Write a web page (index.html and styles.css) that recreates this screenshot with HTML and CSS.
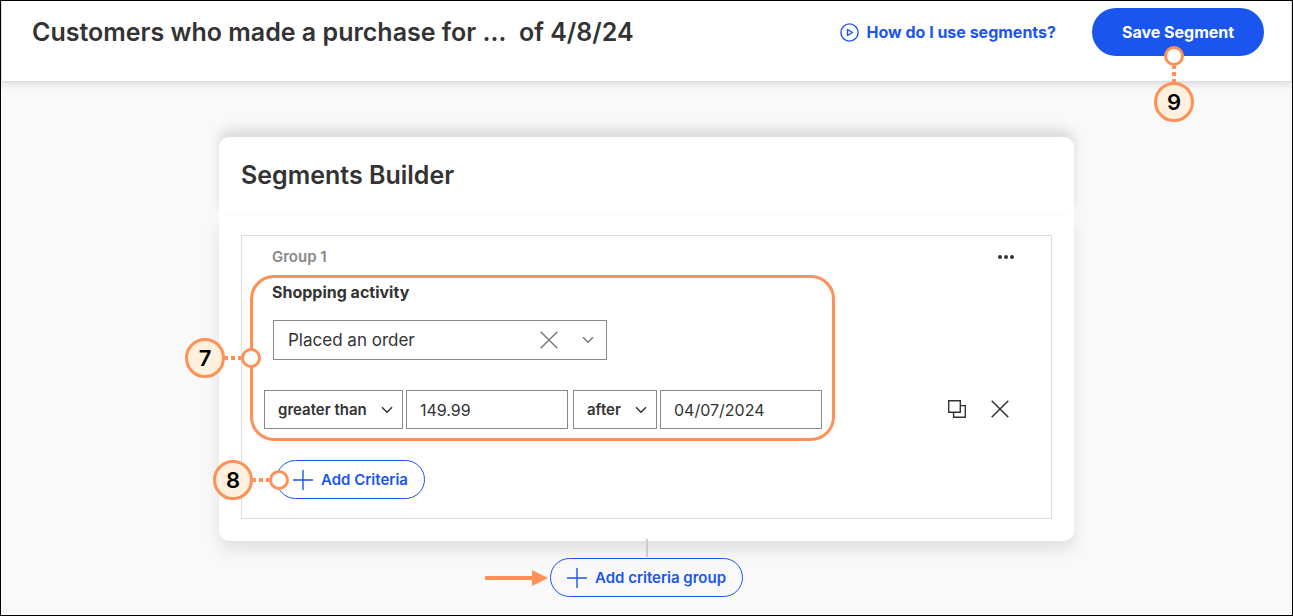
FILE: index.html
```html
<!DOCTYPE html>
<html lang="en">
<head>
	<meta charset="utf-8">
	<title>Segments Builder</title>
	<link rel="stylesheet" href="styles.css">
</head>
<body>
<header class="topbar">
	<h1 class="title">Customers who made a purchase for …&nbsp; of 4/8/24</h1>
	<a class="help" href="#">
		<svg width="19" height="19" viewBox="0 0 19 19" fill="none" stroke="currentColor" stroke-width="1.4"><circle cx="9.5" cy="9.5" r="8.6"/><path d="M7.5 6.5v6l5-3z" stroke-linejoin="round"/></svg>
		How do I use segments?
	</a>
	<div class="anchor">
		<button class="save" type="button">Save Segment</button>
		<div class="callout callout-save"><span class="ring"></span><span class="dots"></span><span class="number">9</span></div>
	</div>
</header>

<main class="page">
	<section class="card">
		<div class="card-head">
			<h2 class="title">Segments Builder</h2>
		</div>
		<div class="card-body">
			<div class="group">
				<div class="group-head">
					<h3 class="group-name">Group 1</h3>
					<button class="icon-button more" type="button" aria-label="Group options">
						<svg width="18" height="6" viewBox="0 0 18 6" fill="currentColor"><circle cx="3" cy="3" r="2"/><circle cx="9" cy="3" r="2"/><circle cx="15" cy="3" r="2"/></svg>
					</button>
				</div>

				<div class="criteria-row">
					<div class="criteria">
						<label class="criteria-name" for="activity">Shopping activity</label>
						<div class="select activity">
							<select id="activity"><option>Placed an order</option></select>
							<button class="icon-button clear" type="button" aria-label="Clear">
								<svg width="18" height="18" viewBox="0 0 18 18" fill="none" stroke="currentColor" stroke-width="1.4"><path d="M.7 .7l16.6 16.6M17.3 .7L.7 17.3"/></svg>
							</button>
							<svg class="chevron" width="12" height="8" viewBox="0 0 12 8" fill="none" stroke="currentColor" stroke-width="1.5"><path d="M1 1.2l5 5 5-5"/></svg>
						</div>
						<div class="filters">
							<div class="pair">
								<div class="select compare">
									<select aria-label="Amount comparison"><option>greater than</option></select>
									<svg class="chevron" width="12" height="8" viewBox="0 0 12 8" fill="none" stroke="currentColor" stroke-width="1.5"><path d="M1 1.2l5 5 5-5"/></svg>
								</div>
								<input class="field" type="text" value="149.99" aria-label="Amount">
							</div>
							<div class="pair">
								<div class="select when">
									<select aria-label="Date comparison"><option>after</option></select>
									<svg class="chevron" width="12" height="8" viewBox="0 0 12 8" fill="none" stroke="currentColor" stroke-width="1.5"><path d="M1 1.2l5 5 5-5"/></svg>
								</div>
								<input class="field" type="text" value="04/07/2024" aria-label="Date">
							</div>
						</div>
						<div class="callout callout-criteria"><span class="number">7</span><span class="dots"></span><span class="ring"></span></div>
					</div>
					<div class="actions">
						<button class="icon-button" type="button" aria-label="Duplicate">
							<svg width="18" height="18" viewBox="0 0 18 18" fill="none" stroke="currentColor"><path d="M.7 .7h11.6v11.6H.7zM12.3 5.6h5v11.7H5.6v-5" stroke-width="1.4"/></svg>
						</button>
						<button class="icon-button" type="button" aria-label="Remove">
							<svg width="18" height="18" viewBox="0 0 18 18" fill="none" stroke="currentColor" stroke-width="1.5"><path d="M.7 .7l16.6 16.6M17.3 .7L.7 17.3"/></svg>
						</button>
					</div>
				</div>

				<div class="anchor add-criteria">
					<button class="add" type="button">
						<svg width="20" height="20" viewBox="0 0 20 20" stroke="currentColor" stroke-width="1.4"><path d="M10 0v20M0 10h20"/></svg>
						Add Criteria
					</button>
					<div class="callout callout-add"><span class="number">8</span><span class="dots"></span><span class="ring"></span></div>
				</div>
			</div>
		</div>
	</section>

	<div class="connector"></div>
	<div class="anchor">
		<button class="add" type="button">
			<svg width="20" height="20" viewBox="0 0 20 20" stroke="currentColor" stroke-width="1.4"><path d="M10 0v20M0 10h20"/></svg>
			Add criteria group
		</button>
		<svg class="arrow" width="63" height="16" viewBox="0 0 63 16" fill="#ff9157"><path d="M0 6h47V0l16 8-16 8v-6H0z"/></svg>
	</div>
</main>
</body>
</html>
```
FILE: styles.css
```css
* {
	box-sizing: border-box;
}
body {
	margin: 0;
	min-height: 100vh;
	border: 1px solid #000;
	background: #f9f9f9;
	color: #333;
	font-family: Inter, "Liberation Sans", sans-serif;
	font-size: 16px;
	line-height: 20px;
}
h1, h2, h3 {
	margin: 0;
}
svg {
	display: block;
	flex: none;
}
button, input, select {
	font: inherit;
	color: inherit;
	margin: 0;
}
button {
	cursor: pointer;
}

.topbar {
	display: flex;
	align-items: center;
	padding: 7px 27px 25px 30px;
	background: #fff;
	border: 1px solid #ddd;
	border-top: 0;
	box-shadow: 0 2px 8px rgba(0, 0, 0, 0.12);
}
.title {
	font-size: 25px;
	line-height: 32px;
	font-weight: 600;
}
.help {
	display: flex;
	align-items: center;
	gap: 8px;
	margin-left: auto;
	margin-right: 36px;
	color: #1a56ee;
	font-size: 16px;
	font-weight: 700;
	text-decoration: none;
}
.save {
	height: 48px;
	width: 172px;
	border: 0;
	border-radius: 24px;
	background: #1a56ee;
	color: #fff;
	font-size: 16px;
	font-weight: 700;
}
.anchor {
	position: relative;
}

/* card */
.page {
	display: flex;
	flex-direction: column;
	align-items: center;
	padding: 55px 20px 18px;
}
.card {
	width: 100%;
	max-width: 855px;
}
.card-head {
	padding: 22px 22px 25px;
	background: #fff;
	border-radius: 10px 10px 0 0;
	box-shadow: 0 -8px 12px rgba(0, 0, 0, 0.12);
}
.card-body {
	position: relative;
	padding: 19px 22px 22px;
	background: #fff;
	border-radius: 0 0 10px 10px;
	box-shadow: 0 9px 16px rgba(0, 0, 0, 0.1);
}
.group {
	padding: 11px 35px 19px 0;
	border: 1px solid #ddd;
}
.group-head {
	display: flex;
	justify-content: space-between;
	margin-bottom: 8px;
	padding-left: 30px;
}
.group-name {
	color: #888;
	font-size: 15px;
	font-weight: 600;
}
.icon-button {
	display: flex;
	align-items: center;
	justify-content: center;
	width: 32px;
	height: 32px;
	padding: 0;
	border: 0;
	background: none;
}
.more {
	width: 20px;
	height: 20px;
}
.criteria-row {
	display: flex;
	align-items: flex-end;
	justify-content: space-between;
}
.criteria {
	position: relative;
	flex: 0 1 585px;
	margin-left: 8px;
	padding: 4px 9px 9px 11px;
	border: 3px solid #ff9157;
	border-radius: 24px;
}
.criteria-name {
	display: block;
	padding-left: 8px;
	font-weight: 700;
}

/* fields */
.select {
	position: relative;
}
.select select {
	appearance: none;
	width: 100%;
	height: 39px;
	padding: 0 13px;
	border: 1px solid #888;
	border-radius: 0;
	background: #fff;
	font-size: 15px;
	font-weight: 600;
}
.chevron {
	position: absolute;
	top: 16px;
	right: 10px;
	pointer-events: none;
}
.activity {
	width: 334px;
	margin: 18px 0 30px 9px;
}
.activity select {
	height: 40px;
	padding: 0 14px;
	font-size: 17px;
	font-weight: 400;
}
.activity .chevron {
	right: 13px;
	color: #777;
}
.clear {
	position: absolute;
	top: 4px;
	right: 42px;
	color: #777;
}
.filters {
	display: flex;
	gap: 5px;
}
.pair {
	display: flex;
	gap: 3px;
}
.compare {
	width: 139px;
}
.when {
	width: 84px;
}
.field {
	width: 162px;
	height: 39px;
	padding: 0 13px;
	border: 1px solid #888;
}
.actions {
	display: flex;
	gap: 11px;
	margin-bottom: 16px;
}

/* pill buttons */
.add {
	display: flex;
	align-items: center;
	gap: 8px;
	height: 39px;
	padding: 0 16px;
	border: 1px solid #1a56ee;
	border-radius: 20px;
	background: none;
	color: #1a56ee;
	font-size: 15px;
	font-weight: 600;
}
.add-criteria {
	width: max-content;
	margin: 19px 0 0 34px;
}
.connector {
	position: relative;
	width: 2px;
	height: 18px;
	margin: -2px 0 1px;
	background: #ccc;
}
.arrow {
	position: absolute;
	top: 12px;
	right: 100%;
	margin-right: 2px;
}

/* numbered callouts */
.callout {
	position: absolute;
	display: flex;
	align-items: center;
	width: 76px;
}
.number {
	width: 40px;
	height: 40px;
	border: 3px solid #ff9157;
	border-radius: 50%;
	background: #fff1de;
	color: #000;
	font-size: 22px;
	line-height: 34px;
	font-weight: 600;
	text-align: center;
}
.ring {
	width: 20px;
	height: 20px;
	border: 3px solid #ff9157;
	border-radius: 50%;
	background: #fff;
}
.dots {
	flex: 1;
	height: 4px;
	background: repeating-linear-gradient(90deg, #ff9157 0 3px, transparent 3px 6px, #ff9157 6px 7px);
}
.callout-criteria {
	top: 50%;
	left: -68px;
	transform: translateY(-50%);
}
.callout-add {
	top: 50%;
	left: -63px;
	transform: translateY(-50%);
}
.callout-save {
	top: 38px;
	left: 62px;
	flex-direction: column;
	width: 40px;
	height: 76px;
}
.callout-save .dots {
	width: 4px;
	background: repeating-linear-gradient(#ff9157 0 3px, transparent 3px 6px, #ff9157 6px 7px);
}
```
